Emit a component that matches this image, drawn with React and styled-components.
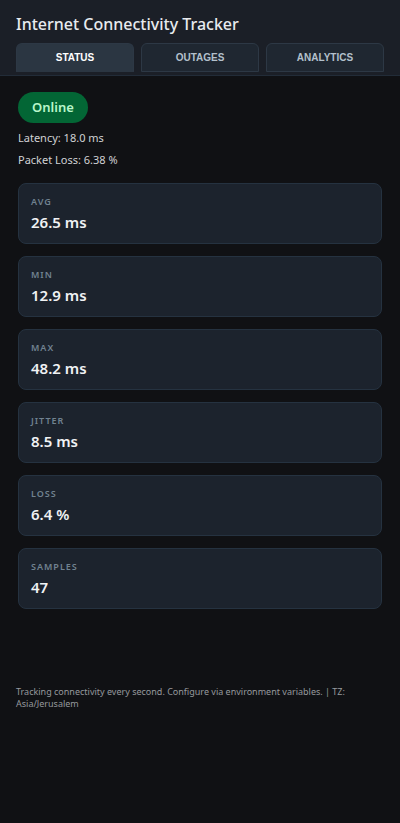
import React, { useState } from "react";
import styled, { createGlobalStyle } from "styled-components";

const GlobalStyle = createGlobalStyle`
  * { box-sizing: border-box; }
  body {
    margin: 0;
    background: #101114;
    color: #e6e8ea;
    font-family: "Noto Sans", "Open Sans", sans-serif;
  }
`;

const Header = styled.header`
  padding: 12px 16px 3px;
  background: #1b1f27;
  border-bottom: 1px solid #222c38;
`;

const Title = styled.h1`
  margin: 0 0 7px;
  font-size: 16px;
  line-height: 24px;
  font-weight: 500;
  color: #e8ebef;
`;

const Tabs = styled.nav`
  display: flex;
  gap: 7px;
`;

const Tab = styled.button`
  flex: 1;
  height: 29px;
  padding: 0;
  border: 1px solid #2d3845;
  border-radius: 6px 6px 0 0;
  border-bottom-color: ${(p) => (p.$active ? "#2b3642" : "#2d3845")};
  background: ${(p) => (p.$active ? "#2b3642" : "#1f2731")};
  color: ${(p) => (p.$active ? "#ffffff" : "#b3c0cc")};
  font: 600 10px/13px "Liberation Sans", Arial, sans-serif;
  cursor: pointer;
`;

const Main = styled.main`
  padding: 16px 18px;
`;

const StatusBadge = styled.div`
  width: fit-content;
  padding: 0 14px;
  border-radius: 16px;
  background: #036635;
  color: #b9f6ca;
  font-size: 13px;
  line-height: 31px;
  font-weight: 600;
`;

const Reading = styled.p`
  margin: 0;
  font-size: 11px;
  line-height: 22px;
  color: #d0d2d4;
`;

const Readings = styled.div`
  padding: 4px 0 12px;
`;

const Cards = styled.dl`
  display: grid;
  gap: 12px;
  margin: 0;
`;

const Card = styled.div`
  padding: 10px 12px;
  border: 1px solid #253240;
  border-radius: 8px;
  background: #1c232d;
`;

const CardLabel = styled.dt`
  font-size: 9px;
  line-height: 16px;
  font-weight: 600;
  letter-spacing: 1px;
  color: #718290;
`;

const CardValue = styled.dd`
  margin: 1px 0 0;
  font-size: 15px;
  line-height: 22px;
  font-weight: 600;
  color: #f0f2f4;
`;

const Footer = styled.footer`
  padding: 61px 16px 16px;
  font-size: 9px;
  line-height: 12px;
  color: #96999d;
`;

const tabs = ["STATUS", "OUTAGES", "ANALYTICS"];

const stats = [
  ["AVG", "26.5 ms"],
  ["MIN", "12.9 ms"],
  ["MAX", "48.2 ms"],
  ["JITTER", "8.5 ms"],
  ["LOSS", "6.4 %"],
  ["SAMPLES", "47"],
];

export default function App() {
  const [active, setActive] = useState("STATUS");
  return (
    <>
      <GlobalStyle />
      <Header>
        <Title>Internet Connectivity Tracker</Title>
        <Tabs>
          {tabs.map((name) => (
            <Tab key={name} type="button" $active={name === active} onClick={() => setActive(name)}>
              {name}
            </Tab>
          ))}
        </Tabs>
      </Header>
      <Main>
        <StatusBadge>Online</StatusBadge>
        <Readings>
          <Reading>Latency: 18.0 ms</Reading>
          <Reading>Packet Loss: 6.38 %</Reading>
        </Readings>
        <Cards>
          {stats.map(([label, value]) => (
            <Card key={label}>
              <CardLabel>{label}</CardLabel>
              <CardValue>{value}</CardValue>
            </Card>
          ))}
        </Cards>
      </Main>
      <Footer>Tracking connectivity every second. Configure via environment variables. | TZ: Asia/Jerusalem</Footer>
    </>
  );
}
